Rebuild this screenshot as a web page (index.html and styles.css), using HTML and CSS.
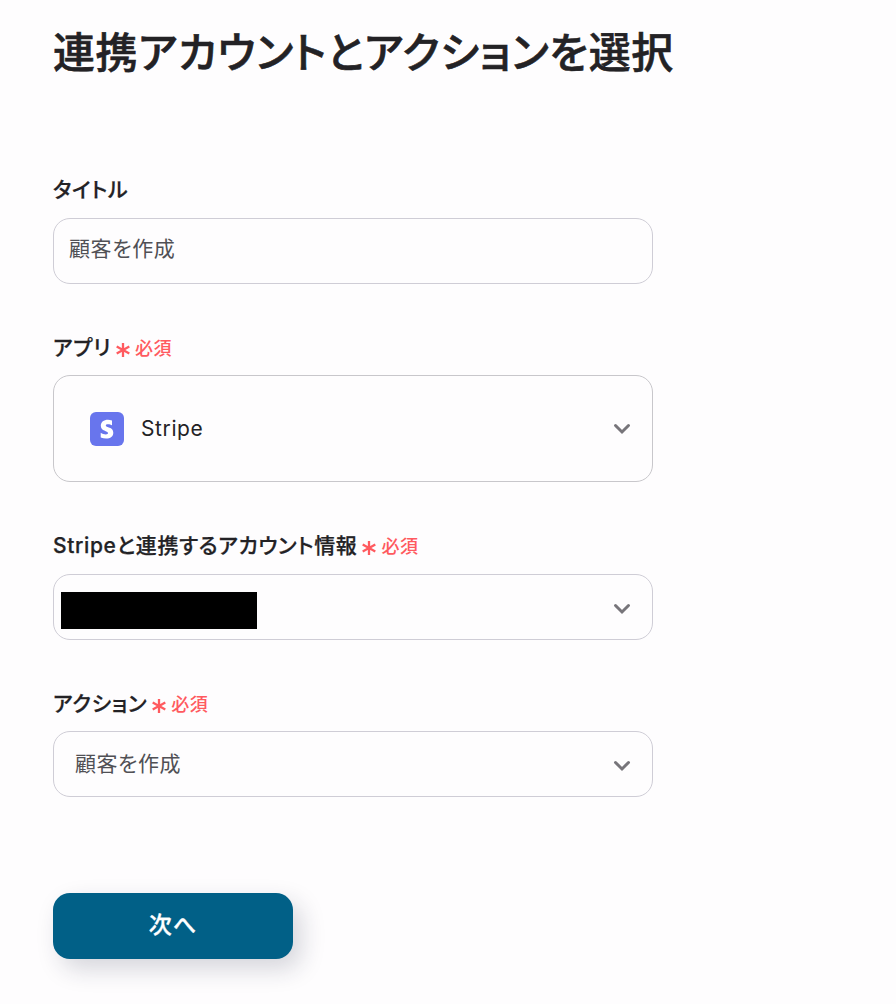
FILE: index.html
```html
<!DOCTYPE html>
<html lang="ja">
<head>
    <meta charset="UTF-8">
    <meta name="viewport" content="width=device-width, initial-scale=1.0">
    <title>連携アカウントとアクションを選択</title>
    <link rel="stylesheet" href="styles.css">
</head>
<body>
    <svg class="sprite" width="0" height="0">
        <symbol id="asterisk" viewBox="0 0 14 14">
            <path d="M7 0v14M.7 3.500l12.600 7M13.300 3.500L.7 10.500"/>
        </symbol>
        <symbol id="chevron" viewBox="0 0 18 12">
            <path d="M2.5 2.5L9 9l6.5-6.5"/>
        </symbol>
    </svg>

    <main class="container">
        <h1>連携アカウントとアクションを選択</h1>

        <form>
            <div class="field">
                <div class="label">タイトル</div>
                <div class="input">顧客を作成</div>
            </div>

            <div class="field">
                <div class="label">アプリ<span class="required"><svg><use href="#asterisk"/></svg>必須</span></div>
                <div class="input app">
                    <svg class="app-icon" viewBox="0 0 34 34">
                        <rect width="34" height="34" rx="6"/>
                        <path d="M15.8 13.5c0-.9.8-1.3 2-1.3 1.6 0 3.300.5 4.200 1V8.500C20.500 8 19.300 7.800 18 7.800c-4.300 0-7.200 2.200-7.200 6 0 5.700 7.200 4.800 7.200 7.300 0 1-.9 1.300-2.100 1.300-1.800 0-3.600-.7-5.200-1.600v4.700c1.800.8 3.600 1.100 5.400 1.100 4.400 0 7.200-2.100 7.200-5.900 0-6.100-7.500-5-7.500-7.200z"/>
                    </svg>
                    <span class="app-name">Stripe</span>
                    <svg class="chevron"><use href="#chevron"/></svg>
                </div>
            </div>

            <div class="field account-field">
                <div class="label">Stripeと連携するアカウント情報<span class="required"><svg><use href="#asterisk"/></svg>必須</span></div>
                <div class="input account">
                    <span class="masked"></span>
                    <svg class="chevron"><use href="#chevron"/></svg>
                </div>
            </div>

            <div class="field">
                <div class="label">アクション<span class="required"><svg><use href="#asterisk"/></svg>必須</span></div>
                <div class="input action">
                    <span>顧客を作成</span>
                    <svg class="chevron"><use href="#chevron"/></svg>
                </div>
            </div>

            <button type="button">次へ</button>
        </form>
    </main>
</body>
</html>
```

FILE: styles.css
```css
* {
    box-sizing: border-box;
}

body {
    margin: 0;
    font-family: Inter, "Noto Sans CJK JP", sans-serif;
    font-feature-settings: "palt";
    background-color: #fefdfe;
    color: #232225;
}

.sprite {
    display: block;
}

.container {
    width: 680px;
    min-height: 1004px;
    padding: 23px 0 0 53px;
}

h1 {
    margin: 0 0 83px;
    font-size: 42px;
    line-height: 60px;
    font-weight: 500;
    letter-spacing: 0.6px;
    white-space: nowrap;
    -webkit-text-stroke: 0.6px #232225;
}

.field {
    width: 600px;
    margin-bottom: 48px;
}

.account-field {
    margin-top: 49px;
}

.label {
    display: flex;
    align-items: center;
    height: 43px;
    padding-bottom: 12px;
    font-size: 21px;
    line-height: 28px;
    font-weight: 500;
    letter-spacing: 0.65px;
    -webkit-text-stroke: 0.25px;
}

.field:first-child .label {
    height: 52px;
    padding-top: 7px;
}

.account-field .label {
    padding-bottom: 14px;
}

.required {
    display: flex;
    align-items: center;
    margin-left: 5px;
    padding-top: 2px;
    color: #ff5a5f;
    font-size: 18px;
    font-weight: 500;
    letter-spacing: 0.5px;
    -webkit-text-stroke: 0;
}

.required svg {
    width: 14px;
    height: 14px;
    margin: 3px 5px 0 0;
    fill: none;
    stroke: #ff5a5f;
    stroke-width: 2.3;
}

.input {
    display: flex;
    align-items: center;
    height: 66px;
    padding: 0 22px 9px 15px;
    border: 1px solid #cfcdd6;
    border-radius: 17px;
    color: #505055;
    font-size: 21px;
    letter-spacing: 0.6px;
}

.chevron {
    width: 18px;
    height: 12px;
    margin-left: auto;
    fill: none;
    stroke: #77757a;
    stroke-width: 3;
    stroke-linecap: round;
}

.app {
    height: 107px;
    padding: 0 21px 0 36px;
    border-color: #c8c7cb;
}

.app-icon {
    width: 34px;
    height: 34px;
}

.app-icon rect {
    fill: #6875ed;
}

.app-icon path {
    fill: #fff;
}

.app-name {
    margin-left: 17px;
    color: #232225;
}

.account {
    padding: 4px 21px 0 7px;
}

.masked {
    width: 196px;
    height: 37px;
    margin-top: 3px;
    background-color: #000;
}

.action {
    padding: 0 21px 0 21px;
}

.action span {
    padding-bottom: 5px;
    letter-spacing: 0.5px;
}

.action .chevron {
    margin-top: 3px;
}

button {
    display: block;
    width: 240px;
    height: 66px;
    margin-top: 96px;
    padding: 0 0 7px;
    border: none;
    border-radius: 17px;
    background-color: #016087;
    box-shadow: 8px 10px 24px rgba(30, 35, 60, 0.18);
    color: #fff;
    font-family: inherit;
    font-feature-settings: inherit;
    font-size: 23px;
    font-weight: 500;
    letter-spacing: 1px;
    cursor: pointer;
    -webkit-text-stroke: 0.3px;
}
```
